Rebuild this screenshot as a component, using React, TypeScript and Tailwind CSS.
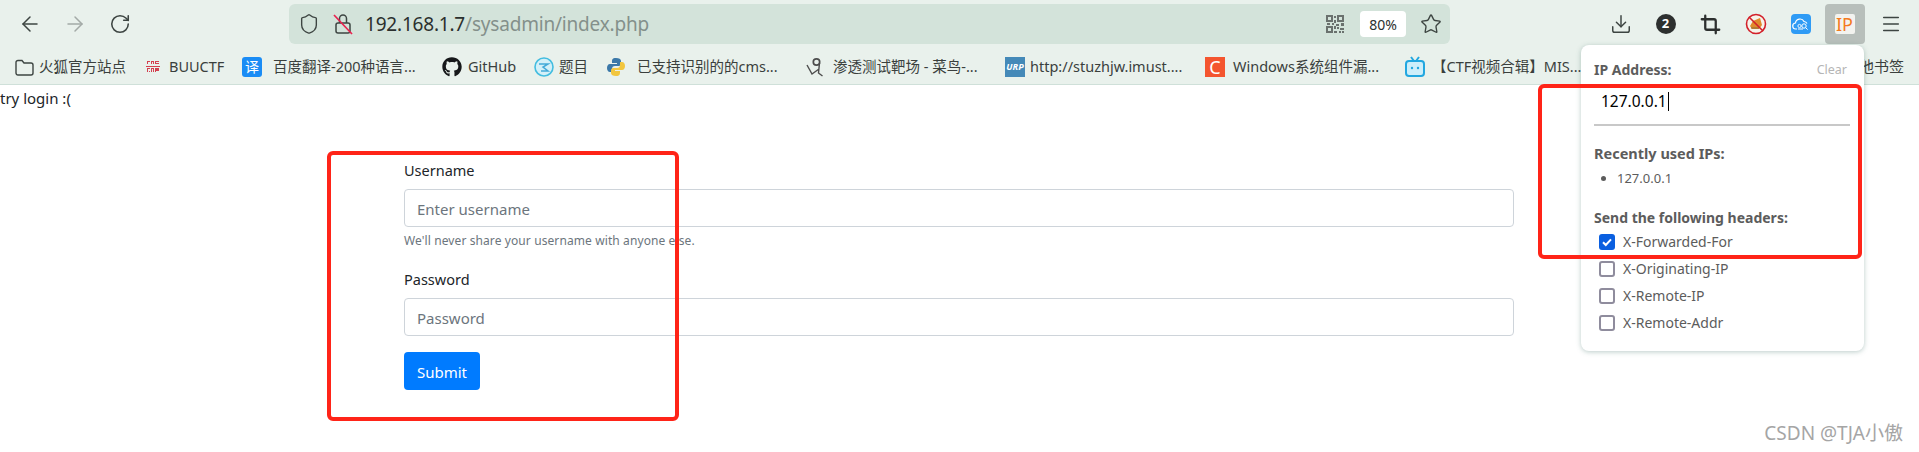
import { ArrowLeft, ArrowRight, Crop, Download, Menu, RotateCw, Shield, Star } from 'lucide-react';
import type { ReactNode } from 'react';
import { FaGithub } from 'react-icons/fa';

const font = { fontFamily: '"Noto Sans", "Noto Sans CJK SC", sans-serif' };

function ToolSlot({ children }: { children: ReactNode }) {
  return <div className="flex h-10 w-[45px] items-center justify-center">{children}</div>;
}

function LockOff() {
  return (
    <svg width="20" height="24" viewBox="0 0 20 24" fill="none">
      <rect x="3" y="11" width="14" height="10" rx="2" stroke="#3d4542" strokeWidth="1.5" />
      <path d="M6.5 11V6.5a3.5 3.5 0 0 1 7 0V11" stroke="#3d4542" strokeWidth="1.5" />
      <path d="M1 3l18 19" stroke="#e8224f" strokeWidth="1.7" />
    </svg>
  );
}

function QrIcon() {
  return (
    <svg width="20" height="20" viewBox="0 0 20 20" fill="#6a716e">
      <path d="M1 1h7v7H1zm2 2v3h3V3zM12 1h7v7h-7zm2 2v3h3V3zM1 12h7v7H1zm2 2v3h3v-3z" fillRule="evenodd" />
      <path d="M9 2h2v2H9zM9 6h2v3H9zM2 9h3v2H2zM7 9h2v2H7zM11 10h3v2h-3zM16 9h3v3h-3zM9 12h2v3H9zM12 13h2v2h-2zM15 14h4v2h-4zM9 17h3v2H9zM14 17h2v2h-2zM17 17h2v2h-2z" />
    </svg>
  );
}

function Bookmark({ icon, label, width, gap, ml }: { icon: ReactNode; label: string; width: string; gap: string; ml: string }) {
  return (
    <div className={`flex shrink-0 items-center ${ml} ${gap}`}>
      {icon}
      <span className={`whitespace-nowrap text-[14.5px] text-[#3a3f3d] ${width}`}>{label}</span>
    </div>
  );
}

function HeaderCheck({ label, checked }: { label: string; checked?: boolean }) {
  return (
    <label className="flex h-[27px] items-center">
      {checked ? (
        <span className="flex h-4 w-4 items-center justify-center rounded-[3px] bg-[#0a5fe0]">
          <svg width="12" height="12" viewBox="0 0 12 12" fill="none">
            <path d="M2 6.2l2.8 2.8L10 3.4" stroke="white" strokeWidth="2" />
          </svg>
        </span>
      ) : (
        <span className="h-4 w-4 rounded-[3px] border-2 border-[#8f8c9d] bg-white" />
      )}
      <span className="ml-2 text-[14px] text-[#5c5c5c]">{label}</span>
    </label>
  );
}

export default function App() {
  return (
    <div className="relative h-[452px] w-[1919px] overflow-hidden bg-white" style={font}>
      <header className="h-[85px] border-b border-[#cfe0d9] bg-[#e9f1ec]">
        <div className="flex h-[49px] items-start pt-1 pl-[7px] pr-[6px]">
          <ToolSlot><ArrowLeft size={24} strokeWidth={1.5} color="#3d4542" /></ToolSlot>
          <ToolSlot><ArrowRight size={24} strokeWidth={1.5} color="#a3aaa7" /></ToolSlot>
          <ToolSlot><RotateCw size={22} strokeWidth={1.7} color="#3d4542" /></ToolSlot>
          <div className="ml-[147px] flex h-10 w-[1161px] items-center rounded-md bg-[#d3e3da] pl-[9px]">
            <Shield size={22} strokeWidth={1.5} color="#3d4542" />
            <div className="ml-[13px] flex w-5 justify-center"><LockOff /></div>
            <p className="ml-[12px] text-[19px] tracking-[-0.2px] text-[#2b302e]">
              192.168.1.7<span className="text-[#84908b]">/sysadmin/index.php</span>
            </p>
            <div className="ml-auto flex items-center">
              <QrIcon />
              <span className="ml-[15px] flex h-[26px] w-[46px] items-center justify-center rounded bg-white text-[14px] text-[#2b302e]">80%</span>
              <Star size={22} strokeWidth={1.5} color="#3d4542" className="mx-[8px] ml-[14px]" />
            </div>
          </div>
          <div className="ml-auto flex">
            <ToolSlot><Download size={22} strokeWidth={1.6} color="#3d4542" /></ToolSlot>
            <ToolSlot>
              <span className="flex h-5 w-5 items-center justify-center rounded-full bg-[#2d302f] text-[13px] font-bold text-white">2</span>
            </ToolSlot>
            <ToolSlot><Crop size={21} strokeWidth={2.6} color="#2d302f" /></ToolSlot>
            <ToolSlot>
              <svg width="22" height="22" viewBox="0 0 22 22">
                <circle cx="11" cy="11" r="9.5" fill="#f6f3ea" />
                <path d="M5 13l3-5 7-3 2 7-3 4H7z" fill="#e08a2c" />
                <path d="M6 15h8" stroke="#8a6a3a" strokeWidth="1" />
                <circle cx="11" cy="11" r="9.5" fill="none" stroke="#d3202a" strokeWidth="1.6" />
                <path d="M4 4l14 14" stroke="#d3202a" strokeWidth="1.6" />
              </svg>
            </ToolSlot>
            <ToolSlot>
              <svg width="20" height="20" viewBox="0 0 20 20">
                <rect width="20" height="20" rx="4" fill="#2f9bf5" />
                <path d="M6 15H5a3 3 0 0 1-.5-6A4.5 4.5 0 0 1 13 7.5a3.5 3.5 0 0 1 3 2" fill="none" stroke="white" strokeWidth="1.2" />
                <circle cx="13" cy="12" r="2.2" fill="none" stroke="white" strokeWidth="1" />
                <path d="M14.6 13.6l2 2M7 15h5" stroke="white" strokeWidth="1" />
                <circle cx="8.5" cy="12" r="1.6" fill="none" stroke="white" strokeWidth="0.9" />
              </svg>
            </ToolSlot>
            <div className="flex h-10 w-[45px] justify-center pr-[2px]">
              <div className="flex h-10 w-10 items-center justify-center rounded bg-[#b8bfbb]">
                <span className="flex h-[20px] w-[20px] items-center justify-center rounded-[2px] bg-[#f3f3ef] text-[18px] leading-none text-[#f47a1f]">IP</span>
              </div>
            </div>
            <ToolSlot><Menu size={22} strokeWidth={1.6} color="#3d4542" /></ToolSlot>
          </div>
        </div>
        <div className="flex h-[35px] items-center">
          <Bookmark
            ml="ml-[15px]"
            gap="gap-[5px]"
            width="w-[90px]"
            label="火狐官方站点"
            icon={
              <svg width="19" height="18" viewBox="0 0 19 18" fill="none">
                <path d="M1 4.5a2 2 0 0 1 2-2h4l2 2.5h7a2 2 0 0 1 2 2V15a2 2 0 0 1-2 2H3a2 2 0 0 1-2-2z" stroke="#3d4542" strokeWidth="1.4" />
              </svg>
            }
          />
          <Bookmark
            ml="ml-[17px]"
            gap="gap-[9px]"
            width="w-[58px]"
            label="BUUCTF"
            icon={
              <svg width="14" height="12" viewBox="0 0 14 12" fill="#d4404f">
                <path d="M1 0h3v1H2v2H1zM5 0h3v3H7V1H6v2H5zM9 0h4v1h-3v1h3v1H9zM0 5h14v1H0zM1 7h3v1H2v3H1zM5 7h3v4H7V8H6v3H5zM9 7h4v3h-3v1H9zM3 10h1v1H3z" />
              </svg>
            }
          />
          <Bookmark
            ml="ml-[15px]"
            gap="gap-[11px]"
            width="w-[150px]"
            label="百度翻译-200种语言..."
            icon={<span className="flex h-5 w-5 items-center justify-center rounded-[3px] bg-[#1a8cf5] text-[14px] text-white">译</span>}
          />
          <Bookmark ml="ml-[19px]" gap="gap-[6px]" width="w-[50px]" label="GitHub" icon={<FaGithub size={20} color="#16181a" />} />
          <Bookmark
            ml="ml-[16px]"
            gap="gap-[5px]"
            width="w-[30px]"
            label="题目"
            icon={
              <svg width="20" height="20" viewBox="0 0 20 20" fill="none">
                <circle cx="10" cy="10" r="9" fill="#d4f0f8" stroke="#43bde0" strokeWidth="1.6" />
                <path d="M5 7h9l-5 3 5 4H7" stroke="#43a9d8" strokeWidth="1.5" />
              </svg>
            }
          />
          <Bookmark
            ml="ml-[17px]"
            gap="gap-[11px]"
            width="w-[145px]"
            label="已支持识别的的cms..."
            icon={
              <svg width="20" height="20" viewBox="0 0 20 20">
                <path d="M10 1C6 1 6 3 6 5v1h5v1H4C2 7 1 9 1 11s1 4 3 4h2v-3c0-2 1-3 3-3h4c1 0 2-1 2-2V4c0-2-2-3-5-3z" fill="#3b78a8" />
                <path d="M10 19c4 0 4-2 4-4v-1H9v-1h7c2 0 3-2 3-4s-1-4-3-4h-2v3c0 2-1 3-3 3H7c-1 0-2 1-2 2v3c0 2 2 3 5 3z" fill="#f2c63f" />
              </svg>
            }
          />
          <Bookmark
            ml="ml-[24px]"
            gap="gap-[9px]"
            width="w-[153px]"
            label="渗透测试靶场 - 菜鸟-..."
            icon={
              <svg width="18" height="22" viewBox="0 0 18 22" fill="none">
                <circle cx="10.5" cy="6" r="3.2" stroke="#4d4d4d" strokeWidth="1.7" />
                <path d="M1 9l5 9 7-5M13.5 7l-1 10 4 3" stroke="#4d4d4d" strokeWidth="1.4" />
              </svg>
            }
          />
          <Bookmark
            ml="ml-[19px]"
            gap="gap-[5px]"
            width="w-[159px]"
            label="http://stuzhjw.imust...."
            icon={<span className="flex h-5 w-5 items-center justify-center bg-[#4489b8] text-[9px] font-bold italic text-white">URP</span>}
          />
          <Bookmark
            ml="ml-[16px]"
            gap="gap-[8px]"
            width="w-[154px]"
            label="Windows系统组件漏..."
            icon={<span className="flex h-5 w-5 items-center justify-center bg-[#f4552f] text-[18px] leading-none text-white">C</span>}
          />
          <Bookmark
            ml="ml-[18px]"
            gap="gap-[7px]"
            width="w-[150px]"
            label="【CTF视频合辑】MIS..."
            icon={
              <svg width="20" height="22" viewBox="0 0 20 22" fill="none">
                <rect x="1" y="5" width="18" height="15" rx="3" fill="#cdeefa" stroke="#22a7e0" strokeWidth="2" />
                <path d="M6 1l3 4M14 1l-3 4" stroke="#22a7e0" strokeWidth="2" />
                <circle cx="7" cy="12" r="1.2" fill="#22a7e0" />
                <circle cx="13" cy="12" r="1.2" fill="#22a7e0" />
              </svg>
            }
          />
          <span className="ml-auto mr-[15px] text-[15px] text-[#3a3f3d]">其他书签</span>
        </div>
      </header>

      <main>
        <p className="h-[25px] text-[15px] leading-[27px] text-[#212529]">try login :(</p>
        <form className="ml-[404px] mt-[50px] w-[1110px]">
          <label className="mb-2 block text-[14.5px] leading-[21px] text-[#212529]">Username</label>
          <div className="flex h-[38px] items-center rounded border border-[#ced4da] px-[12px] pt-[2px] text-[15px] text-[#6c757d]">Enter username</div>
          <small className="mt-1 block text-[12px] leading-[19px] tracking-[0.1px] text-[#6c757d]">We'll never share your username with anyone else.</small>
          <label className="mb-2 mt-[19px] block text-[14.5px] leading-[21px] text-[#212529]">Password</label>
          <div className="flex h-[38px] items-center rounded border border-[#ced4da] px-[12px] pt-[2px] text-[15px] text-[#6c757d]">Password</div>
          <button type="button" className="mt-4 h-[38px] w-[76px] rounded bg-[#007bff] pt-[2px] text-[15px] text-white">Submit</button>
        </form>
      </main>

      <aside className="absolute left-[1581px] top-[45px] h-[306px] w-[283px] rounded-lg bg-white px-[13px] shadow-[0_1px_5px_rgba(60,110,100,0.35)]">
        <div className="flex h-[35px] items-end justify-between">
          <span className="text-[14px] font-bold text-[#5c5c5c]">IP Address:</span>
          <span className="pr-[4px] text-[12.5px] text-[#b5b5b5]">Clear</span>
        </div>
        <div className="flex h-[43px] items-center pl-[7px] text-[15.5px] text-black">
          127.0.0.1<span className="ml-px h-[19px] w-px bg-black" />
        </div>
        <div className="h-[2px] w-[256px] translate-y-[1px] bg-[#c8c8c8]" />
        <p className="mt-[18px] text-[14.5px] font-bold text-[#5c5c5c]">Recently used IPs:</p>
        <ul className="mt-[4px] list-disc pl-[23px] text-[13px] text-[#5c5c5c]">
          <li>127.0.0.1</li>
        </ul>
        <p className="mt-[19px] text-[14px] font-bold text-[#5c5c5c]">Send the following headers:</p>
        <div className="mt-[0px] pl-[5px]">
          <HeaderCheck label="X-Forwarded-For" checked />
          <HeaderCheck label="X-Originating-IP" />
          <HeaderCheck label="X-Remote-IP" />
          <HeaderCheck label="X-Remote-Addr" />
        </div>
      </aside>

      {/* red annotation boxes drawn over the screenshot */}
      <div className="absolute left-[327px] top-[151px] h-[270px] w-[352px] rounded-md border-[4px] border-[#ff2418]" />
      <div className="absolute left-[1538px] top-[84px] h-[175px] w-[324px] rounded-md border-[4px] border-[#ff2418]" />
      <span className="absolute right-[16px] top-[419px] text-[19px] text-[#a5a5a5]">CSDN @TJA小傲</span>
    </div>
  );
}
